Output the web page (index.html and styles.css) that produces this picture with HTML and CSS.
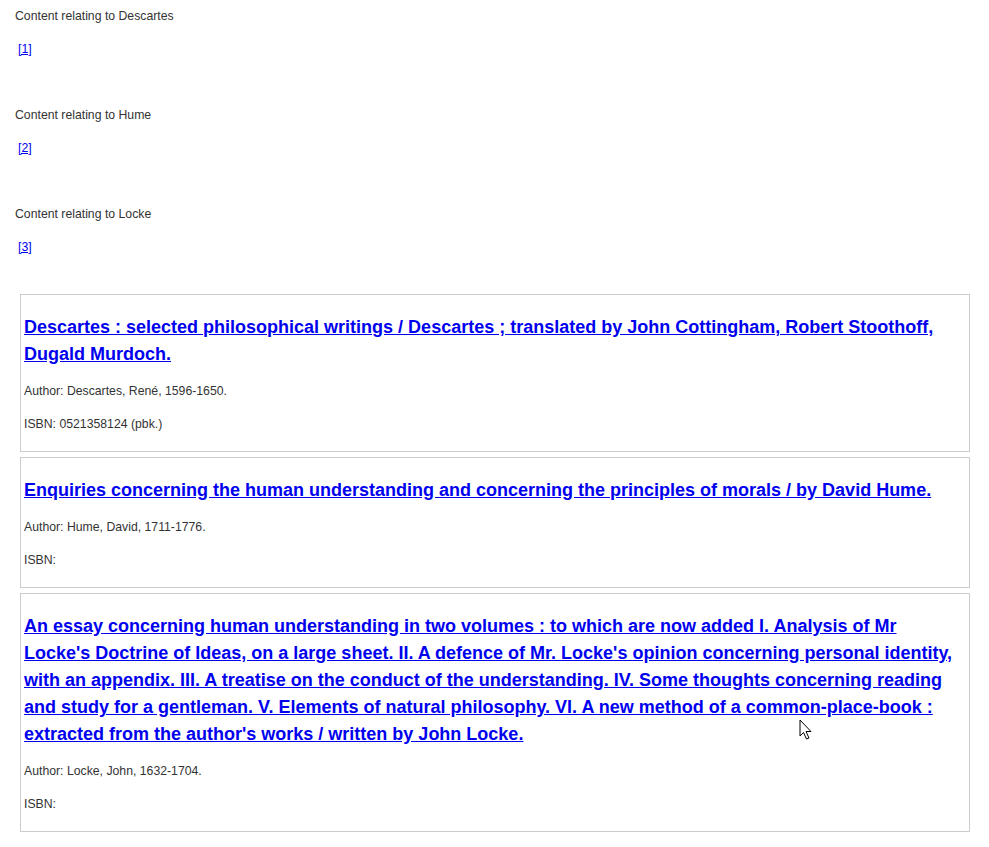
FILE: index.html
```html
<!DOCTYPE html>
<html lang="en">
<head>
<meta charset="utf-8">
<title>Philosophy content</title>
<link rel="stylesheet" href="styles.css">
</head>
<body>
<div class="page">
  <div class="topics">
    <div class="topic">
      <p class="label">Content relating to Descartes</p>
      <p class="ref"><a href="#r1">[1]</a></p>
    </div>
    <div class="topic">
      <p class="label">Content relating to Hume</p>
      <p class="ref"><a href="#r2">[2]</a></p>
    </div>
    <div class="topic">
      <p class="label">Content relating to Locke</p>
      <p class="ref"><a href="#r3">[3]</a></p>
    </div>
  </div>
  <div class="records">
    <div class="record" id="r1">
      <h3 class="title"><a href="#">Descartes : selected philosophical writings / Descartes ; translated by John Cottingham, Robert Stoothoff, Dugald Murdoch.</a></h3>
      <p class="meta">Author: Descartes, René, 1596-1650.</p>
      <p class="meta">ISBN: 0521358124 (pbk.)</p>
    </div>
    <div class="record" id="r2">
      <h3 class="title"><a href="#">Enquiries concerning the human understanding and concerning the principles of morals / by David Hume.</a></h3>
      <p class="meta">Author: Hume, David, 1711-1776.</p>
      <p class="meta">ISBN:</p>
    </div>
    <div class="record" id="r3">
      <h3 class="title"><a href="#">An essay concerning human understanding in two volumes : to which are now added I. Analysis of Mr Locke's Doctrine of Ideas, on a large sheet. II. A defence of Mr. Locke's opinion concerning personal identity, with an appendix. III. A treatise on the conduct of the understanding. IV. Some thoughts concerning reading and study for a gentleman. V. Elements of natural philosophy. VI. A new method of a common-place-book : extracted from the author's works / written by John Locke.</a></h3>
      <p class="meta">Author: Locke, John, 1632-1704.</p>
      <p class="meta">ISBN:</p>
      <svg class="cursor" width="14" height="22" viewBox="0 0 14 22"><path d="M1 1 L1 17 L4.5 13.5 L7.5 20 L10 19 L7 12.5 L12 12.5 Z" fill="#fff" stroke="#000" stroke-width="1" stroke-linejoin="miter"/></svg>
    </div>
  </div>
</div>
</body>
</html>
```

FILE: styles.css
```css
html, body {
  margin: 0;
  padding: 0;
  background: #fff;
}
body {
  font-family: "Liberation Sans", Arial, sans-serif;
  color: #333;
}
.page {
  padding: 8px 15px 0 15px;
}
.topics {
  display: flex;
  flex-direction: column;
  gap: 49px;
}
.topic {
  display: flex;
  flex-direction: column;
  gap: 16px;
}
.label, .ref, .meta {
  margin: 0;
  font-size: 12.25px;
  line-height: 17px;
}
.ref {
  padding-left: 3px;
}
a {
  color: #0000ee;
}
.records {
  margin: 38px 0 0 5px;
  width: 950px;
  display: flex;
  flex-direction: column;
  gap: 5px;
}
.record {
  position: relative;
  border: 1px solid #cccccc;
  padding: 19px 3px 18px 3px;
  display: flex;
  flex-direction: column;
  gap: 16px;
}
.title {
  margin: 0 0 -1px 0;
  font-size: 18px;
  line-height: 27px;
  font-weight: bold;
}
.cursor {
  position: absolute;
  left: 778px;
  top: 125px;
}
```
